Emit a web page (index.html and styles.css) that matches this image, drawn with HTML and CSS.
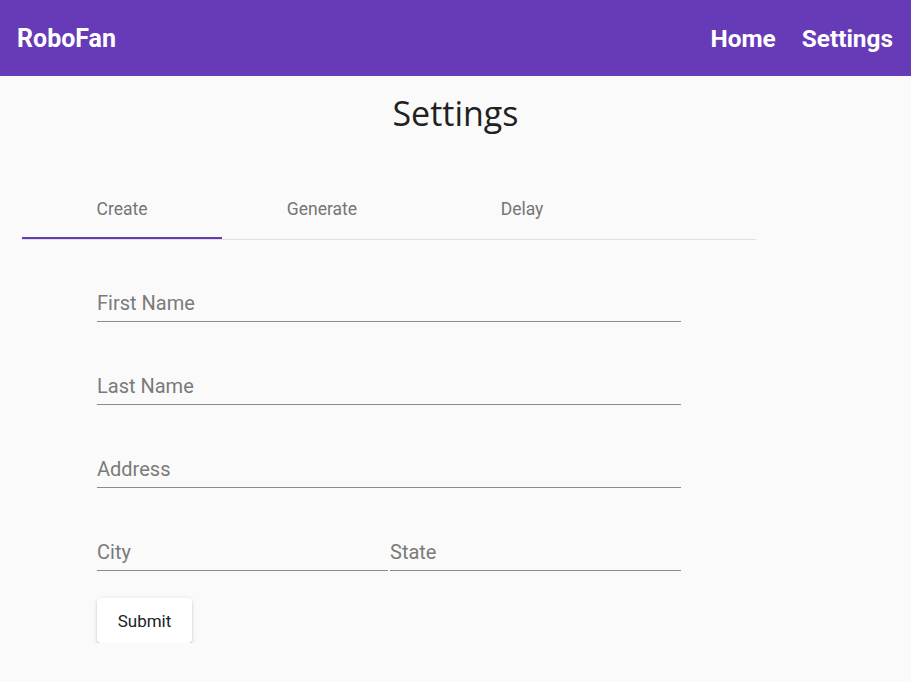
FILE: index.html
```html
<!DOCTYPE html>
<html lang="en">
<head>
<meta charset="utf-8">
<title>RoboFan</title>
<link rel="stylesheet" href="styles.css">
</head>
<body>
<header class="toolbar">
  <span class="brand">RoboFan</span>
  <nav class="nav">
    <a class="nav-link" href="#">Home</a>
    <a class="nav-link" href="#">Settings</a>
  </nav>
</header>
<main class="page">
  <h1 class="title">Settings</h1>
  <section class="tabs">
    <div class="tab-header">
      <div class="tab active">Create</div>
      <div class="tab">Generate</div>
      <div class="tab">Delay</div>
    </div>
    <form class="form">
      <div class="field first"><span class="label">First Name</span></div>
      <div class="field"><span class="label">Last Name</span></div>
      <div class="field"><span class="label">Address</span></div>
      <div class="row">
        <div class="field"><span class="label">City</span></div>
        <div class="field"><span class="label">State</span></div>
      </div>
      <button class="submit" type="button">Submit</button>
    </form>
  </section>
</main>
</body>
</html>
```
FILE: styles.css
```css
* { box-sizing: border-box; }
html, body { margin: 0; padding: 0; }
body {
  background: #fafafa;
  font-family: Roboto, "Liberation Sans", sans-serif;
  color: #212121;
}
.toolbar {
  height: 76px;
  background: #673ab7;
  color: #fff;
  display: flex;
  align-items: center;
  justify-content: space-between;
  padding: 0 18px 0 17px;
}
.brand {
  font-size: 25px;
  font-weight: 700;
}
.nav { display: flex; gap: 26px; }
.nav-link {
  color: #fff;
  text-decoration: none;
  font-size: 24.4px;
  font-weight: 700;
}
.page { padding: 0 0 0 22px; }
.title {
  margin: 15px 0 0 -22px;
  text-align: center;
  font-family: "Open Sans", "Noto Sans", sans-serif;
  font-weight: 500;
  font-size: 34px;
  line-height: 44px;
  color: #212121;
}
.tabs { width: 734px; margin-top: 56px; }
.tab-header {
  display: flex;
  height: 49px;
  border-bottom: 1px solid #e0e0e0;
}
.tab {
  width: 200px;
  display: flex;
  align-items: center;
  justify-content: center;
  font-size: 17.5px;
  color: #757575;
  padding-bottom: 12px;
}
.tab.active { border-bottom: 2px solid #673ab7; padding-bottom: 10px; }
.form {
  width: 584px;
  margin-left: 75px;
  display: flex;
  flex-direction: column;
}
.field {
  padding: 52px 0 6px;
  border-bottom: 1px solid #8a8a8a;
}
.field.first { padding-top: 51px; }
.label {
  display: block;
  font-size: 20px;
  line-height: 24px;
  color: #7a7a7a;
}
.row { display: flex; gap: 2px; }
.row .field { flex: 1; }
.submit {
  align-self: flex-start;
  margin-top: 27px;
  width: 95px;
  height: 45px;
  background: #fff;
  border: none;
  border-radius: 4px;
  box-shadow: 0 3px 1px -2px rgba(0,0,0,.2), 0 2px 2px 0 rgba(0,0,0,.14), 0 1px 5px 0 rgba(0,0,0,.12);
  font-family: Roboto, "Liberation Sans", sans-serif;
  font-size: 17px;
  color: #212121;
}
```
